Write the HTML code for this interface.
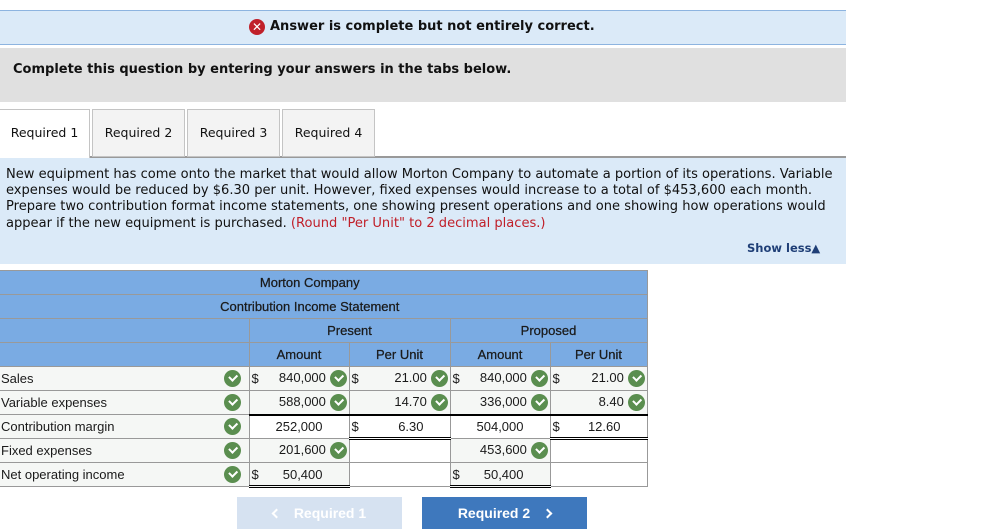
<!DOCTYPE html>
<html><head><meta charset="utf-8"><style>
*{margin:0;padding:0;box-sizing:border-box}
body{width:999px;height:531px;background:#fff;position:relative;overflow:hidden;font-family:"DejaVu Sans",Verdana,sans-serif;color:#111}
.a{position:absolute}
.banner{left:0;top:10px;width:846px;height:35px;background:#dbeaf8;border-top:1px solid #8db4e0;border-bottom:1px solid #8db4e0}
.gray{left:0;top:48px;width:846px;height:54px;background:#e0e0e0}
.tab{top:109px;height:48px;border:1px solid #c4c4c4;background:#f3f3f3;font-size:12.5px;line-height:46px;text-align:center}
.panel{left:0;top:157px;width:846px;height:107px;background:#dbeaf8;border-top:1px solid #999}
table{border-collapse:collapse;font-family:"Liberation Sans",Arial,sans-serif;font-size:13px;position:absolute;left:-1px;top:270px}
td{height:24px;border:1px solid #999;padding:0 2px;white-space:nowrap;color:#1a1a1a}
tr.h td{background:#7aabe3;text-align:center;color:#1a1a1a;-webkit-text-stroke:0.25px #1a1a1a}
td.l{background:#f5f7f5;border-left:none;border-right:none}
td.c{background:#f5f7f5}
td.w{background:#fff}
.ok{display:inline-block;width:17px;height:17px;border-radius:50%;background:#5a8e4f;vertical-align:middle;position:relative}
.ok:after{content:"";position:absolute;left:5px;top:4px;width:6px;height:3.5px;border-left:2px solid #fff;border-bottom:2px solid #fff;transform:rotate(-45deg)}
.cell{display:flex;align-items:center;justify-content:space-between}
.l .cell .ok{margin-right:6px}
.dbl{border-bottom:3px double #000}
.sgl{border-top:2px solid #000}
.btn{font-family:'Liberation Sans',Arial,sans-serif;font-weight:bold;font-size:14px;color:#fff;height:32px;top:497px;width:165px;display:flex;align-items:center;justify-content:center;gap:14px}
.chev{display:inline-block;width:7px;height:7px;border-top:2px solid #fff;border-left:2px solid #fff}
</style></head><body>
<div class="a banner"></div>
<div class="a" style="left:249px;top:19px;width:16px;height:16px;border-radius:50%;background:#c0202a;color:#fff;font-size:12px;font-weight:bold;text-align:center;line-height:16px">✕</div>
<div class="a" style="left:270px;top:19px;font-size:13px;font-weight:bold">Answer is complete but not entirely correct.</div>
<div class="a gray"></div>
<div class="a" style="left:13px;top:62px;font-size:13px;font-weight:bold">Complete this question by entering your answers in the tabs below.</div>
<div class="a" style="left:0;top:156px;width:846px;border-top:1px solid #999"></div>
<div class="a tab" style="left:0;width:90px;background:#fff;border-bottom:none;border-left:none;height:49px;z-index:2">Required 1</div>
<div class="a tab" style="left:92px;width:93px">Required 2</div>
<div class="a tab" style="left:187px;width:93px">Required 3</div>
<div class="a tab" style="left:282px;width:93px">Required 4</div>
<div class="a panel"></div>
<div class="a" style="left:6px;top:167px;font-size:13.05px;line-height:16.2px;white-space:nowrap">New equipment has come onto the market that would allow Morton Company to automate a portion of its operations. Variable<br>expenses would be reduced by $6.30 per unit. However, fixed expenses would increase to a total of $453,600 each month.<br>Prepare two contribution format income statements, one showing present operations and one showing how operations would<br>appear if the new equipment is purchased. <span style="color:#c0202a">(Round "Per Unit" to 2 decimal places.)</span></div>
<div class="a" style="left:747px;top:241px;font-size:11.5px;font-weight:bold;color:#1f3f77">Show less▲</div>

<table>
<colgroup><col style="width:250px"><col style="width:100px"><col style="width:101px"><col style="width:100px"><col style="width:97px"></colgroup>
<tr class="h"><td colspan="5" style="border-left:none;padding-right:28px">Morton Company</td></tr>
<tr class="h"><td colspan="5" style="border-left:none;padding-right:28px">Contribution Income Statement</td></tr>
<tr class="h"><td style="border-left:none"></td><td colspan="2">Present</td><td colspan="2">Proposed</td></tr>
<tr class="h"><td style="border-left:none"></td><td>Amount</td><td>Per Unit</td><td>Amount</td><td>Per Unit</td></tr>
<tr><td class="l"><div class="cell">Sales<span class="ok"></span></div></td><td class="c"><div class="cell"><span>$</span><span>840,000 <span class="ok"></span></span></div></td><td class="c"><div class="cell"><span>$</span><span>21.00 <span class="ok"></span></span></div></td><td class="c"><div class="cell"><span>$</span><span>840,000 <span class="ok"></span></span></div></td><td class="c"><div class="cell"><span>$</span><span>21.00 <span class="ok"></span></span></div></td></tr>
<tr><td class="l"><div class="cell">Variable expenses<span class="ok"></span></div></td><td class="c" style="text-align:right">588,000 <span class="ok"></span></td><td class="c" style="text-align:right">14.70 <span class="ok"></span></td><td class="c" style="text-align:right">336,000 <span class="ok"></span></td><td class="c" style="text-align:right">8.40 <span class="ok"></span></td></tr>
<tr><td class="l"><div class="cell">Contribution margin<span class="ok"></span></div></td><td class="w sgl" style="text-align:right;padding-right:26px">252,000</td><td class="w sgl dbl"><div class="cell"><span>$</span><span style="padding-right:24px">6.30</span></div></td><td class="w sgl" style="text-align:right;padding-right:26px">504,000</td><td class="w sgl dbl"><div class="cell"><span>$</span><span style="padding-right:24px">12.60</span></div></td></tr>
<tr><td class="l"><div class="cell">Fixed expenses<span class="ok"></span></div></td><td class="c" style="text-align:right">201,600 <span class="ok"></span></td><td class="w"></td><td class="c" style="text-align:right">453,600 <span class="ok"></span></td><td class="w"></td></tr>
<tr><td class="l"><div class="cell">Net operating income<span class="ok"></span></div></td><td class="c dbl"><div class="cell"><span>$</span><span style="padding-right:24px">50,400</span></div></td><td class="w"></td><td class="c dbl"><div class="cell"><span>$</span><span style="padding-right:24px">50,400</span></div></td><td class="w"></td></tr>
</table>

<div class="a btn" style="left:237px;background:#d6e2f1"><span class="chev" style="transform:rotate(-45deg)"></span><span>Required 1</span></div>
<div class="a btn" style="left:422px;background:#3e78bd"><span>Required 2</span><span class="chev" style="transform:rotate(135deg)"></span></div>
</body></html>
